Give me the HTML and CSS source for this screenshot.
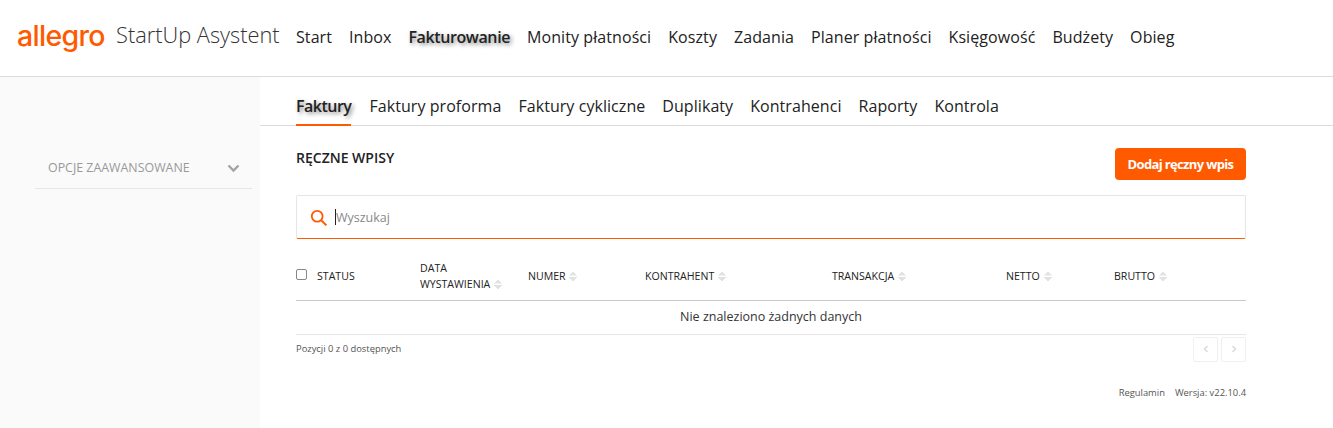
FILE: index.html
```html
<!DOCTYPE html>
<html lang="pl">
<head>
<meta charset="utf-8">
<title>Allegro StartUp Asystent</title>
<link rel="stylesheet" href="styles.css">
</head>
<body>
<header class="topbar">
  <div class="brand"><span class="logo">allegro</span><span class="product">StartUp Asystent</span></div>
  <nav class="mainnav">
    <a>Start</a><a>Inbox</a><a class="active">Fakturowanie</a><a>Monity płatności</a><a>Koszty</a><a>Zadania</a><a>Planer płatności</a><a>Księgowość</a><a>Budżety</a><a>Obieg</a>
  </nav>
</header>
<div class="layout">
  <aside class="sidebar">
    <div class="advanced">
      <span>OPCJE ZAAWANSOWANE</span>
      <svg class="chev" width="13" height="9" viewBox="0 0 13 9"><path d="M1.5 1.5 6.5 6.5 11.5 1.5" fill="none" stroke="#a3a3a3" stroke-width="2.4"/></svg>
    </div>
  </aside>
  <main class="content">
    <nav class="tabs">
      <a class="active">Faktury</a><a>Faktury proforma</a><a>Faktury cykliczne</a><a>Duplikaty</a><a>Kontrahenci</a><a>Raporty</a><a>Kontrola</a>
    </nav>
    <div class="panel">
      <div class="titlerow">
        <h2>RĘCZNE WPISY</h2>
        <button class="primary">Dodaj ręczny wpis</button>
      </div>
      <div class="search">
        <svg class="searchicon" width="18" height="18" viewBox="0 0 18 18"><circle cx="7.2" cy="7.2" r="5.4" fill="none" stroke="#ff5a00" stroke-width="1.8"/><path d="M11.2 11.2 16.4 16.4" stroke="#ff5a00" stroke-width="2"/></svg>
        <span class="caret"></span><span class="placeholder">Wyszukaj</span>
      </div>
      <table class="grid">
        <colgroup><col class="c1"><col class="c2"><col class="c3"><col class="c4"><col class="c5"><col class="c6"><col class="c7"></colgroup>
        <thead>
          <tr>
            <th><span class="check"></span>STATUS</th>
            <th>DATA<br>WYSTAWIENIA <i class="sort"></i></th>
            <th>NUMER <i class="sort"></i></th>
            <th>KONTRAHENT <i class="sort"></i></th>
            <th>TRANSAKCJA <i class="sort"></i></th>
            <th>NETTO <i class="sort"></i></th>
            <th>BRUTTO <i class="sort"></i></th>
          </tr>
        </thead>
        <tbody><tr><td colspan="7">Nie znaleziono żadnych danych</td></tr></tbody>
      </table>
      <div class="tablefoot">
        <span class="info">Pozycji 0 z 0 dostępnych</span>
        <div class="pager">
          <span class="pagebtn"><svg width="6" height="8" viewBox="0 0 6 8"><path d="M4.5 1 1.5 4 4.5 7" fill="none" stroke="#dcdcdc" stroke-width="1.6"/></svg></span>
          <span class="pagebtn"><svg width="6" height="8" viewBox="0 0 6 8"><path d="M1.5 1 4.5 4 1.5 7" fill="none" stroke="#dcdcdc" stroke-width="1.6"/></svg></span>
        </div>
      </div>
      <footer class="pagefoot"><span>Regulamin</span><span>Wersja: v22.10.4</span></footer>
    </div>
  </main>
</div>
</body>
</html>
```
FILE: styles.css
```css
* { box-sizing: border-box; }
html, body { margin: 0; height: 100%; }
body { font-family: "Open Sans", "Liberation Sans", sans-serif; color: #222; background: #fff; overflow: hidden; }
a { color: inherit; text-decoration: none; }

.topbar { height: 77px; display: flex; align-items: center; border-bottom: 1px solid #dcdcdc; padding-left: 17px; }
.brand { display: flex; align-items: baseline; width: 279px; flex: none; margin-top: -4px; }
.logo { font-family: "Inter", sans-serif; font-weight: 500; font-size: 28.5px; letter-spacing: -0.7px; color: #ff5a00; line-height: 36px; width: 89px; white-space: nowrap; }
.product { font-size: 21.8px; font-weight: 300; color: #333; margin-left: 10px; white-space: nowrap; position: relative; top: -3px; }
.mainnav { display: flex; gap: 17px; font-size: 16px; letter-spacing: 0.08px; margin-top: -2px; }
.mainnav a { white-space: nowrap; }
.active { font-weight: 600; text-shadow: 2px 2px 4px #888; }
.mainnav a.active { letter-spacing: -0.4px; }

.layout { display: flex; height: 351px; }
.sidebar { width: 260px; flex: none; background: #fafafa; padding: 74px 8px 0 35px; }
.advanced { display: flex; justify-content: space-between; align-items: center; height: 38px; padding: 0 12px 4px 13px; border-bottom: 1px solid #e6e6e6; font-size: 12.4px; color: #999; }
.chev { margin-top: 1px; }

.content { flex: 1; min-width: 0; }
.tabs { display: flex; gap: 17px; height: 49px; padding-left: 36px; border-bottom: 1px solid #dcdcdc; font-size: 16px; letter-spacing: 0.06px; }
.tabs a { height: 49px; line-height: 58px; white-space: nowrap; }
.tabs a.active { border-bottom: 2px solid #ff5a00; letter-spacing: -0.5px; margin-right: 1px; }

.panel { width: 950px; margin-left: 36px; }
.titlerow { display: flex; justify-content: space-between; height: 69px; padding-top: 22px; }
h2 { margin: 0; font-size: 14px; font-weight: 600; line-height: 20px; color: #222; }
.primary { height: 32px; width: 131px; border: 0; border-radius: 4px; background: #ff5a00; color: #fff; font: 700 13px "Open Sans", sans-serif; letter-spacing: -0.65px; }

.search { height: 44px; display: flex; align-items: center; padding-left: 14px; border: 1px solid #e6e6e6; border-bottom: 1px solid #ff5a00; border-radius: 2px; }
.searchicon { margin-top: 2px; margin-left: -1px; }
.caret { width: 1px; height: 16px; background: #222; margin-left: 7px; }
.placeholder { font-size: 12.5px; color: #888; }

.grid { width: 100%; table-layout: fixed; border-collapse: collapse; margin-top: 15px; }
.c1 { width: 124px; } .c2 { width: 108px; } .c3 { width: 117px; } .c4 { width: 187px; } .c5 { width: 174px; } .c6 { width: 108px; } .c7 { width: 132px; }
th { height: 46px; padding: 0 0 2px; font-size: 10.6px; font-weight: 400; line-height: 16px; text-align: left; color: #222; border-bottom: 1px solid #c8c8c8; vertical-align: middle; }
td { height: 34px; padding: 0 0 2px; font-size: 12.5px; text-align: center; color: #333; border-bottom: 1px solid #e6e6e6; }
.check { display: inline-block; width: 11px; height: 11px; border: 1px solid #888; border-radius: 2px; margin-right: 10px; position: relative; top: -2px; vertical-align: middle; }
.sort { display: inline-block; width: 8px; height: 11px; margin-left: 1px; vertical-align: -2px; background:
  linear-gradient(to bottom right, transparent 50%, #e2e2e2 50%) left top / 50% 4.5px no-repeat,
  linear-gradient(to bottom left, transparent 50%, #e2e2e2 50%) right top / 50% 4.5px no-repeat,
  linear-gradient(to top right, transparent 50%, #e2e2e2 50%) left bottom / 50% 4.5px no-repeat,
  linear-gradient(to top left, transparent 50%, #e2e2e2 50%) right bottom / 50% 4.5px no-repeat; }

.tablefoot { display: flex; justify-content: space-between; padding-top: 2px; }
.info { font-size: 9.4px; color: #555; line-height: 24px; }
.pager { display: flex; gap: 3px; }
.pagebtn { width: 25px; height: 25px; display: flex; align-items: center; justify-content: center; border: 1px solid #f0f0f0; border-radius: 2px; }
.pagefoot { display: flex; justify-content: flex-end; gap: 10px; margin-top: 23px; font-size: 9.4px; line-height: 16px; color: #555; }
```
